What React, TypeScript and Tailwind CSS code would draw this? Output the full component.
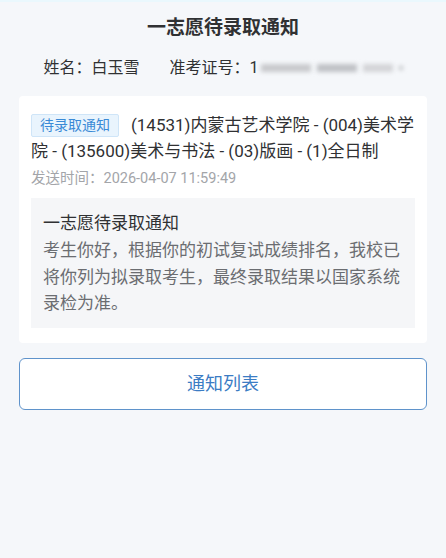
export default function App() {
  return (
    <div
      className="min-h-[558px] bg-[#f5f7fa] border-t-2 border-[#eaf8fd]"
      style={{ fontFamily: 'Roboto, "Noto Sans CJK SC", "Noto Sans", sans-serif' }}
    >
      {/* Header */}
      <h1 className="pt-[12px] text-center text-[19px] leading-[28px] font-bold text-[#303133]">
        一志愿待录取通知
      </h1>
      <div className="mt-[14px] flex items-center justify-center gap-[30px] text-[16px] leading-[24px] text-[#303133]">
        <span>姓名：白玉雪</span>
        <span className="flex items-center">
          准考证号：1
          <span className="ml-[2px] flex items-center gap-[6px] blur-[2px]">
            <span className="h-[8px] w-[50px] bg-[#c8c9cc]" />
            <span className="h-[8px] w-[40px] bg-[#bfc1c5]" />
            <span className="h-[8px] w-[30px] bg-[#d3d4d7]" />
            <span className="h-[4px] w-[4px] bg-[#c0c2c5]" />
          </span>
        </span>
      </div>

      {/* Notice card */}
      <div className="mx-[19px] mt-[16px] rounded-[4px] bg-white px-[12px] pt-[16px] pb-[15px]">
        <p className="text-[17px] leading-[26px] text-[#303133]">
          <span className="mr-[12px] inline-block rounded-[2px] border border-[#cfe5f8] bg-[#e9f4fd] px-[8px] align-[1px] text-[14px] leading-[21px] text-[#3a8ad6]">
            待录取通知
          </span>
          (14531)内蒙古艺术学院 - (004)美术学院 - (135600)美术与书法 - (03)版画 - (1)全日制
        </p>
        <p className="mt-[4px] text-[14.5px] leading-[22px] text-[#a3a5a9]">
          发送时间：2026-04-07 11:59:49
        </p>
        <div className="mt-[8px] bg-[#f5f6f8] px-[12px] pt-[12px] pb-[11px]">
          <p className="text-[17px] leading-[26px] text-[#303133]">一志愿待录取通知</p>
          <p className="mt-[1px] text-[17px] leading-[26.5px] text-[#6b6d71]">
            考生你好，根据你的初试复试成绩排名，我校已将你列为拟录取考生，最终录取结果以国家系统录检为准。
          </p>
        </div>
      </div>

      {/* Button */}
      <button className="mx-[19px] mt-[15px] block h-[52px] w-[408px] rounded-[6px] border border-[#5f93cb] bg-white text-[18px] text-[#3b7cc4]">
        通知列表
      </button>
    </div>
  );
}
